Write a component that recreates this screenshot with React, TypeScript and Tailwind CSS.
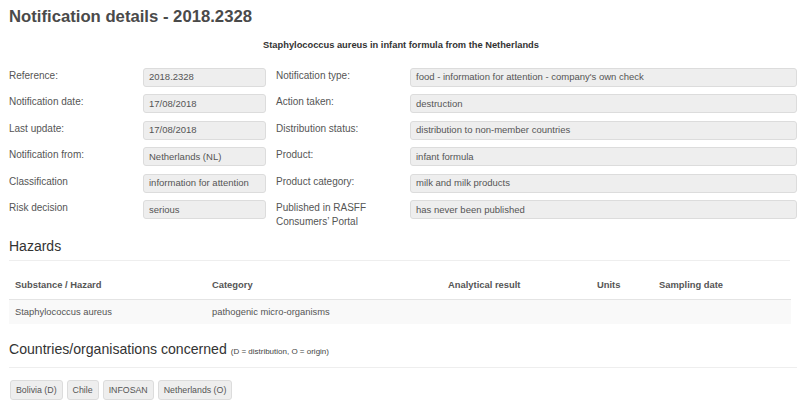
const font = { fontFamily: '"Liberation Sans", Arial, sans-serif' }

const left: [string, string][] = [
  ['Reference:', '2018.2328'],
  ['Notification date:', '17/08/2018'],
  ['Last update:', '17/08/2018'],
  ['Notification from:', 'Netherlands (NL)'],
  ['Classification', 'information for attention'],
  ['Risk decision', 'serious'],
]

const right: [string, string][] = [
  ['Notification type:', "food - information for attention - company's own check"],
  ['Action taken:', 'destruction'],
  ['Distribution status:', 'distribution to non-member countries'],
  ['Product:', 'infant formula'],
  ['Product category:', 'milk and milk products'],
  ['Published in RASFF Consumers\u2019 Portal', 'has never been published'],
]

const Box = ({ value }: { value: string }) => (
  <div className="h-[19px] flex items-center px-[5px] bg-[#eeeeee] border border-[#dcdcdc] rounded-[3px] text-[9.5px] text-[#555] whitespace-nowrap overflow-hidden">
    {value}
  </div>
)

export default function App() {
  return (
    <div style={font} className="w-[800px] h-[414px] overflow-hidden bg-white text-[#555] pl-[9px] pr-[3px]">
      {/*title*/}
      <h1 className="pt-[6px] text-[16.7px] leading-[22px] font-bold text-[#4a4a4a]">Notification details - 2018.2328</h1>
      <div className="mt-[11px] text-center text-[9.3px] font-bold text-[#333] pr-[4px]">
        Staphylococcus aureus in infant formula from the Netherlands
      </div>

      {/*details*/}
      <div className="mt-[15px] grid grid-cols-[134px_123px_10px_134px_1fr] gap-y-[7.5px]">
        {left.map(([label, value], i) => (
          <div key={label} className="contents">
            <div className="text-[10px] leading-[13px] pt-[1px]">{label}</div>
            <Box value={value} />
            <div />
            <div className="text-[10px] leading-[13.5px] pt-[1px] pr-[30px]">{right[i][0]}</div>
            <Box value={right[i][1]} />
          </div>
        ))}
      </div>

      {/*hazards*/}
      <h2 className="mt-[9px] text-[14px] leading-[18px] text-[#333] pb-[5px] border-b border-[#eeeeee] mr-[7px]">Hazards</h2>
      <table className="mt-[10px] w-[782px] text-[9.4px] text-[#555]">
        <thead>
          <tr className="border-b border-[#e4e4e4] h-[28px]">
            <th className="text-left font-bold pl-[6px] w-[203px]">Substance / Hazard</th>
            <th className="text-left font-bold w-[236px]">Category</th>
            <th className="text-left font-bold w-[149px]">Analytical result</th>
            <th className="text-left font-bold w-[62px]">Units</th>
            <th className="text-left font-bold">Sampling date</th>
          </tr>
        </thead>
        <tbody>
          <tr className="bg-[#f9f9f9] h-[25px]">
            <td className="pl-[6px]">Staphylococcus aureus</td>
            <td>pathogenic micro-organisms</td>
            <td />
            <td />
            <td />
          </tr>
        </tbody>
      </table>

      {/*countries*/}
      <h2 className="mt-[16px] text-[14.1px] leading-[18px] text-[#333] pb-[6px] border-b border-[#eeeeee]">
        Countries/organisations concerned <span className="text-[8px] text-[#444]">(D = distribution, O = origin)</span>
      </h2>
      <div className="mt-[12px] ml-[1px] flex gap-[4px]">
        {['Bolivia (D)', 'Chile', 'INFOSAN', 'Netherlands (O)'].map(c => (
          <span key={c} className="h-[20px] px-[5px] flex items-center bg-[#eeeeee] border border-[#dcdcdc] rounded-[3px] text-[8.8px] text-[#555]">
            {c}
          </span>
        ))}
      </div>
    </div>
  )
}
